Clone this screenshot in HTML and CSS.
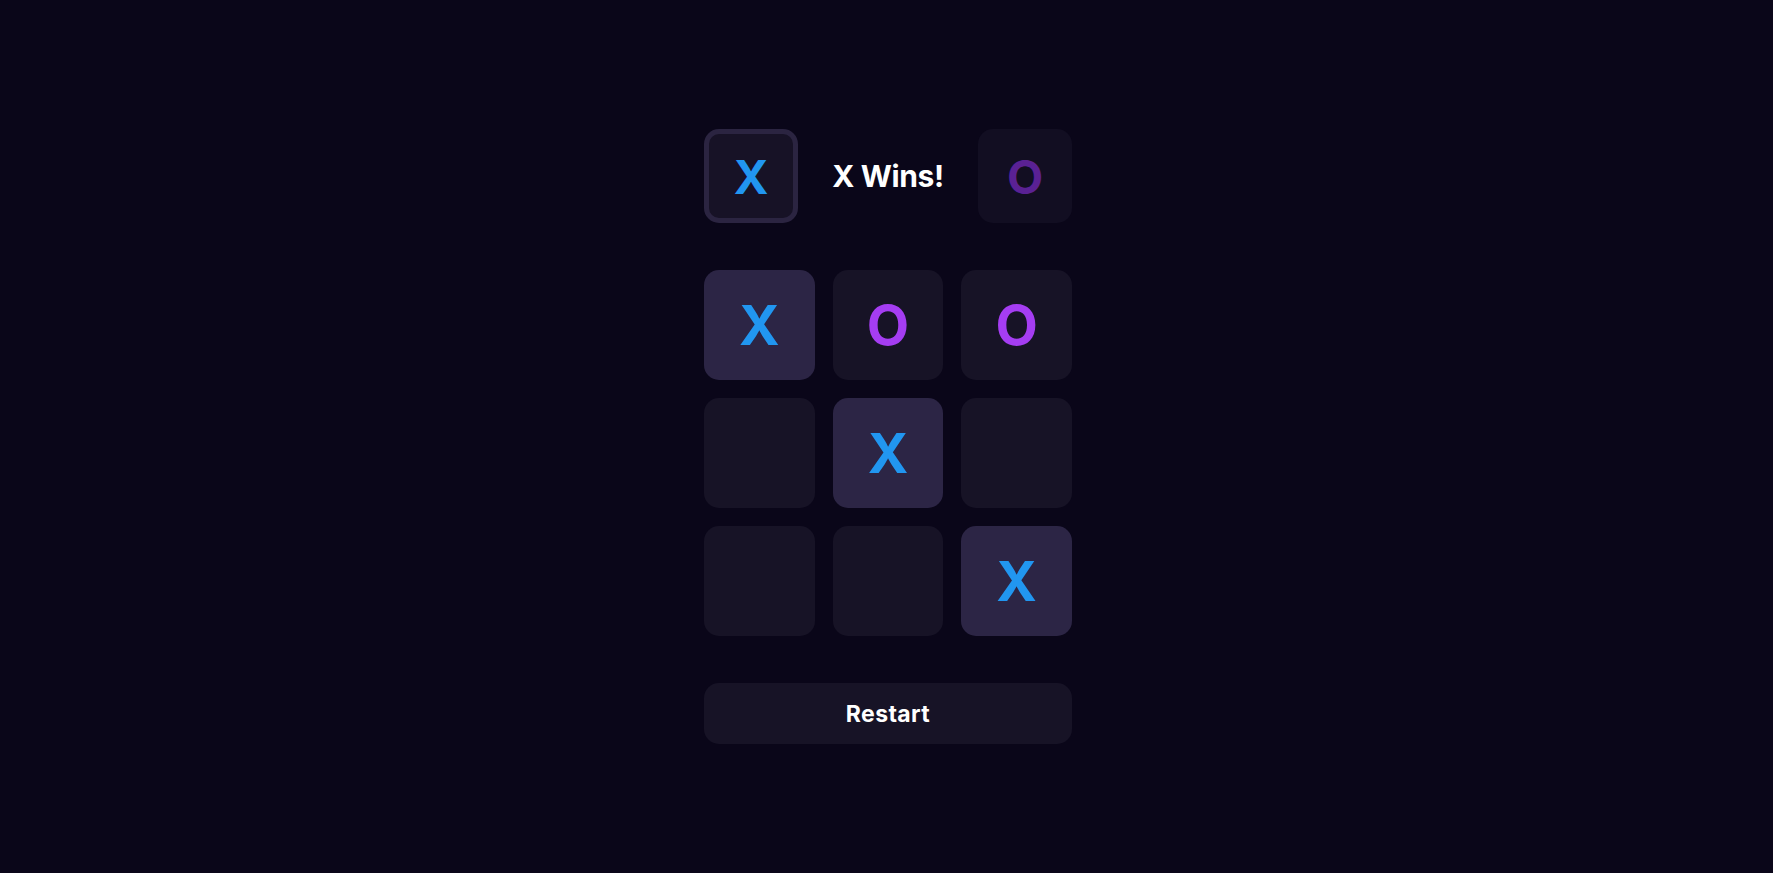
FILE: index.html
```html
<!DOCTYPE html>
<html lang="en">
<head>
<meta charset="utf-8">
<title>Tic Tac Toe</title>
<link rel="stylesheet" href="styles.css">
</head>
<body>
<main class="game">
  <header class="status">
    <div class="player player-active"><span class="mark mark-x">X</span></div>
    <div class="message">X Wins!</div>
    <div class="player player-idle"><span class="mark mark-o-dim">O</span></div>
  </header>
  <section class="board">
    <div class="cell cell-win"><span class="mark-x">X</span></div>
    <div class="cell"><span class="mark-o">O</span></div>
    <div class="cell"><span class="mark-o">O</span></div>
    <div class="cell"></div>
    <div class="cell cell-win"><span class="mark-x">X</span></div>
    <div class="cell"></div>
    <div class="cell"></div>
    <div class="cell"></div>
    <div class="cell cell-win"><span class="mark-x">X</span></div>
  </section>
  <button class="restart">Restart</button>
</main>
</body>
</html>
```
FILE: styles.css
```css
* { box-sizing: border-box; }
html, body { height: 100%; }
body {
  margin: 0;
  padding-left: 3px;
  background: #0a0619;
  font-family: Inter, "Noto Sans", sans-serif;
  color: #fff;
  display: flex;
  align-items: center;
  justify-content: center;
}
.game {
  width: 368px;
  display: flex;
  flex-direction: column;
  gap: 47px;
}
.status {
  display: flex;
  align-items: center;
  justify-content: space-between;
  height: 94px;
}
.player {
  width: 94px;
  height: 94px;
  border-radius: 15px;
  display: flex;
  align-items: center;
  justify-content: center;
  font-size: 47px;
  font-weight: 700;
  line-height: 1;
}
.player-active {
  background: #171226;
  border: 5px solid #2b2441;
}
.player-idle {
  background: #120e22;
}
.message {
  font-size: 30px;
  font-weight: 700;
  letter-spacing: -0.4px;
}
.board {
  display: grid;
  grid-template-columns: repeat(3, 1fr);
  gap: 18px;
}
.cell {
  height: 110px;
  border-radius: 15px;
  background: #171326;
  display: flex;
  align-items: center;
  justify-content: center;
  font-size: 55px;
  font-weight: 700;
  line-height: 1;
}
.cell-win { background: #2c2545; }
.mark-x { color: #2196f0; }
.mark-o { color: #a53df2; }
.mark-o-dim { color: #5a2194; }
.restart {
  height: 61px;
  border: none;
  border-radius: 15px;
  background: #171326;
  color: #fff;
  font-family: inherit;
  font-size: 23px;
  font-weight: 700;
  letter-spacing: 0.4px;
  cursor: pointer;
}
```
